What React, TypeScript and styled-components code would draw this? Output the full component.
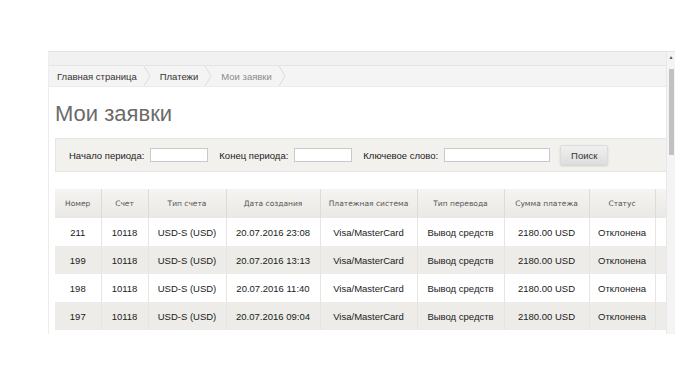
import React from 'react';
import styled, { createGlobalStyle } from 'styled-components';

const GlobalStyle = createGlobalStyle`
  html, body {
    margin: 0;
    padding: 0;
    background: #ffffff;
    font-family: "Liberation Sans", Arial, sans-serif;
  }
`;

const Stage = styled.div`
  width: 683px;
  height: 384px;
  padding: 51px 0 0 48px;
  box-sizing: border-box;
  overflow: hidden;
`;

const Window = styled.div`
  width: 627px;
  height: 283px;
  display: flex;
  border-top: 1px solid #e2e2e2;
  border-left: 1px solid #ededed;
  box-sizing: border-box;
`;

const Viewport = styled.div`
  flex: 1;
  min-width: 0;
  overflow: hidden;
  display: flex;
  flex-direction: column;
`;

const TopStrip = styled.div`
  height: 13px;
  background: #f1f1f1;
  border-bottom: 1px solid #e4e4e4;
  flex-shrink: 0;
`;

const Crumbs = styled.nav`
  height: 20px;
  background: #f4f4f4;
  border-bottom: 1px solid #ececec;
  display: flex;
  align-items: center;
  flex-shrink: 0;
`;

const Crumb = styled.span<{ current?: boolean }>`
  position: relative;
  display: flex;
  align-items: center;
  height: 100%;
  padding: 0 16px 0 7px;
  font-size: 9.5px;
  color: ${({ current }) => (current ? '#8a8a8a' : '#333')};
  &:first-child {
    padding-left: 8px;
  }
`;

const Chevron = styled.svg`
  position: absolute;
  right: 2px;
  top: 0;
  width: 8px;
  height: 20px;
`;

const Main = styled.div`
  padding: 0 0 0 6px;
`;

const Title = styled.h1`
  margin: 13px 0 10px;
  font-size: 22px;
  font-weight: normal;
  color: #6b6b6b;
  line-height: 28px;
`;

const Filter = styled.form`
  width: 620px;
  height: 34px;
  background: #f2f1ee;
  border: 1px solid #e6e5e1;
  box-sizing: border-box;
  display: flex;
  align-items: center;
  padding-left: 13px;
  font-size: 9.5px;
  color: #222;
`;

const FieldLabel = styled.label`
  margin-right: 6px;
`;

const Field = styled.input<{ w: number }>`
  width: ${({ w }) => w}px;
  height: 14px;
  box-sizing: border-box;
  border: 1px solid #c9c9c9;
  background: #fff;
  margin: 0 11px 0 0;
  padding: 0;
`;

const SearchButton = styled.button`
  margin-left: -1px;
  width: 48px;
  height: 20px;
  border: 1px solid #dcdcdc;
  border-radius: 2px;
  background: linear-gradient(#f0f0f0, #dedede);
  box-shadow: 0 1px 2px rgba(0, 0, 0, 0.15);
  font-family: "Liberation Sans", Arial, sans-serif;
  font-size: 9.5px;
  color: #333;
  padding: 0;
`;

const Table = styled.table`
  margin-top: 17px;
  border-collapse: collapse;
  table-layout: fixed;
  width: 640px;
`;

const Th = styled.th`
  height: 29px;
  padding: 0;
  background: linear-gradient(#f5f4f1, #e9e8e4);
  border-right: 1px solid #dcdbd7;
  font-family: "DejaVu Sans", Verdana, sans-serif;
  font-size: 7.5px;
  font-weight: normal;
  color: #555;
  text-align: center;
`;

const Row = styled.tr<{ shaded: boolean }>`
  background: ${({ shaded }) => (shaded ? '#edece8' : '#ffffff')};
`;

const Td = styled.td`
  height: 28px;
  padding: 0;
  border-right: 1px solid #e6e5e1;
  font-size: 9.5px;
  color: #1a1a1a;
  text-align: center;
  white-space: nowrap;
  overflow: hidden;
`;

const Scrollbar = styled.div`
  width: 8px;
  flex-shrink: 0;
  background: #f4f4f4;
  border-left: 1px solid #e8e8e8;
  display: flex;
  flex-direction: column;
  align-items: center;
`;

const Arrow = styled.div`
  height: 9px;
  display: flex;
  align-items: center;
  justify-content: center;
  font-size: 5px;
  color: #555;
`;

const Thumb = styled.div`
  width: 5px;
  height: 86px;
  background: #c1c1c1;
  margin-top: 8px;
`;

const columns = [
  { title: 'Номер', width: 46 },
  { title: 'Счет', width: 47 },
  { title: 'Тип счета', width: 78 },
  { title: 'Дата создания', width: 94 },
  { title: 'Платежная система', width: 97 },
  { title: 'Тип перевода', width: 87 },
  { title: 'Сумма платежа', width: 85 },
  { title: 'Статус', width: 66 },
  { title: '', width: 40 },
];

const rows = [
  ['211', '10118', 'USD-S (USD)', '20.07.2016 23:08', 'Visa/MasterCard', 'Вывод средств', '2180.00 USD', 'Отклонена', ''],
  ['199', '10118', 'USD-S (USD)', '20.07.2016 13:13', 'Visa/MasterCard', 'Вывод средств', '2180.00 USD', 'Отклонена', ''],
  ['198', '10118', 'USD-S (USD)', '20.07.2016 11:40', 'Visa/MasterCard', 'Вывод средств', '2180.00 USD', 'Отклонена', ''],
  ['197', '10118', 'USD-S (USD)', '20.07.2016 09:04', 'Visa/MasterCard', 'Вывод средств', '2180.00 USD', 'Отклонена', ''],
];

const ChevronMark = () => (
  <Chevron viewBox="0 0 8 20">
    <path d="M1 0 L7 10 L1 20" fill="none" stroke="#dcdcdc" strokeWidth="1" />
  </Chevron>
);

export default function App() {
  return (
    <>
      <GlobalStyle />
      <Stage>
        <Window>
          <Viewport>
            <TopStrip />
            <Crumbs>
              <Crumb>Главная страница<ChevronMark /></Crumb>
              <Crumb>Платежи<ChevronMark /></Crumb>
              <Crumb current>Мои заявки<ChevronMark /></Crumb>
            </Crumbs>
            <Main>
              <Title>Мои заявки</Title>
              <Filter onSubmit={(e) => e.preventDefault()}>
                <FieldLabel>Начало периода:</FieldLabel>
                <Field w={58} />
                <FieldLabel>Конец периода:</FieldLabel>
                <Field w={58} />
                <FieldLabel>Ключевое слово:</FieldLabel>
                <Field w={106} />
                <SearchButton type="submit">Поиск</SearchButton>
              </Filter>
              <Table>
                <colgroup>
                  {columns.map((c, i) => (
                    <col key={i} style={{ width: c.width }} />
                  ))}
                </colgroup>
                <thead>
                  <tr>
                    {columns.map((c, i) => (
                      <Th key={i}>{c.title}</Th>
                    ))}
                  </tr>
                </thead>
                <tbody>
                  {rows.map((r, i) => (
                    <Row key={i} shaded={i % 2 === 1}>
                      {r.map((cell, j) => (
                        <Td key={j}>{cell}</Td>
                      ))}
                    </Row>
                  ))}
                </tbody>
              </Table>
            </Main>
          </Viewport>
          <Scrollbar>
            <Arrow>▲</Arrow>
            <Thumb />
          </Scrollbar>
        </Window>
      </Stage>
    </>
  );
}
